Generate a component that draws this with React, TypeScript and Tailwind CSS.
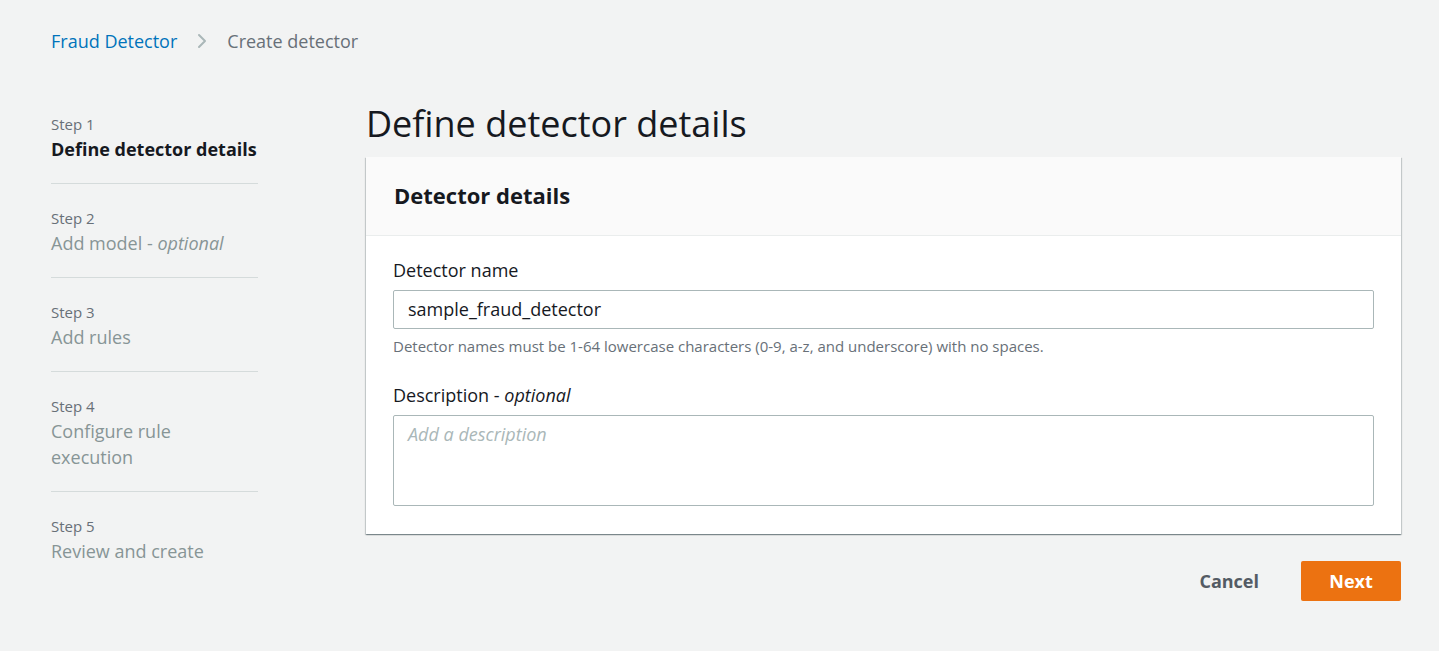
import { ChevronRight } from 'lucide-react'

const font = { fontFamily: '"Open Sans", "Noto Sans", sans-serif' }

const steps = [
  { label: 'Step 1', title: 'Define detector details', active: true },
  { label: 'Step 2', title: 'Add model', optional: true },
  { label: 'Step 3', title: 'Add rules' },
  { label: 'Step 4', title: 'Configure rule execution' },
  { label: 'Step 5', title: 'Review and create' },
]

export default function App() {
  return (
    <div className="min-h-[651px] w-full bg-[#f2f3f3] text-[#16191f]" style={font}>
      {/* Breadcrumb */}
      <nav className="flex items-center pl-[51px] pt-[29px] text-[18px] leading-[24px]">
        <span className="text-[#0073bb]">Fraud Detector</span>
        <ChevronRight className="mx-[13px] h-[24px] w-[24px] text-[#aab7b8]" strokeWidth={2} />
        <span className="text-[#687078]">Create detector</span>
      </nav>

      <div className="flex pt-[47px] pl-[51px] pr-[38px]">
        {/* Steps */}
        <aside className="w-[207px] shrink-0 pt-[12px]">
          {steps.map((s, i) => (
            <div
              key={s.label}
              className={`pb-[21px] ${i > 0 ? 'pt-[22px]' : ''} ${i < steps.length - 1 ? 'border-b border-[#d5dbdb]' : ''}`}
            >
              <p className="text-[15px] leading-[24px] text-[#687078]">{s.label}</p>
              <p
                className={`text-[18px] leading-[26px] ${s.active ? 'whitespace-nowrap font-bold text-[#16191f]' : 'pr-[4px] text-[#879596]'}`}
              >
                {s.title}
                {s.optional && (
                  <>
                    {' - '}
                    <i>optional</i>
                  </>
                )}
              </p>
            </div>
          ))}
        </aside>

        {/* Main */}
        <main className="ml-[108px] flex-1">
          <h1 className="text-[36px] leading-[48px] font-normal mb-[9px]">Define detector details</h1>

          <section className="bg-white shadow-[0_1px_1px_0_rgba(0,28,36,0.3),1px_1px_1px_0_rgba(0,28,36,0.15),-1px_1px_1px_0_rgba(0,28,36,0.15)]">
            <div className="bg-[#fafafa] border-b border-[#eaeded] px-[28px] pt-[25px] pb-[27px]">
              <h2 className="text-[22px] leading-[26px] font-bold">Detector details</h2>
            </div>
            <div className="px-[27px] pt-[21px] pb-[28px]">
              <label className="block text-[18px] leading-[26px] mb-[7px]">Detector name</label>
              <div className="h-[39px] border border-[#aab7b8] rounded-[2px] flex items-center px-[14px] text-[18px]">
                sample_fraud_detector
              </div>
              <p className="text-[15px] leading-[20px] text-[#687078] mt-[7px]">
                Detector names must be 1-64 lowercase characters (0-9, a-z, and underscore) with no spaces.
              </p>

              <label className="block text-[18px] leading-[26px] mt-[26px] mb-[7px]">
                Description - <i>optional</i>
              </label>
              <div className="h-[91px] border border-[#aab7b8] rounded-[2px] px-[14px] pt-[6px] text-[18px] leading-[24px] italic text-[#aab7b8]">
                Add a description
              </div>
            </div>
          </section>

          <div className="flex justify-end items-center mt-[27px] gap-[22px]">
            <button className="px-[20px] h-[40px] text-[18px] font-bold text-[#545b64]">Cancel</button>
            <button className="w-[100px] h-[40px] rounded-[2px] bg-[#ec7211] text-white text-[18px] font-bold">
              Next
            </button>
          </div>
        </main>
      </div>
    </div>
  )
}
